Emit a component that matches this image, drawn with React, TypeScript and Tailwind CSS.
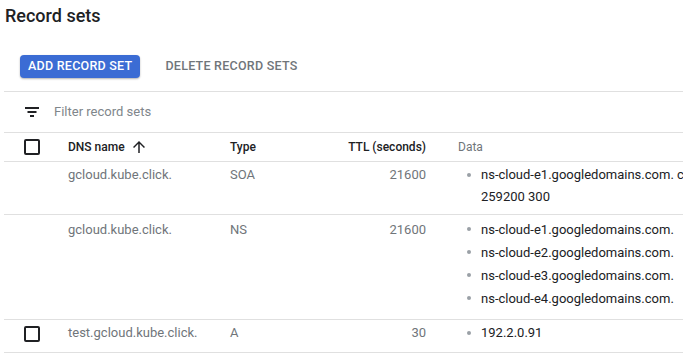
import React from "react";

const Checkbox = () => (
  <div className="w-[16px] h-[16px] border-2 border-[#202124] rounded-[2px] box-border" />
);

const Bullet = ({ children }: { children: React.ReactNode }) => (
  <div className="flex">
    <div className="w-[23px] shrink-0 relative">
      <span className="absolute left-[9px] top-[9px] w-[4px] h-[4px] rounded-full bg-[#9aa0a6]" />
    </div>
    <div className="whitespace-nowrap">{children}</div>
  </div>
);

export default function App() {
  return (
    <div
      className="w-[683px] h-[361px] overflow-hidden bg-white"
      style={{ fontFamily: "Roboto, 'Liberation Sans', sans-serif" }}
    >
      <div className="pl-[4px]">
        <h1 className="pt-[4px] pl-[1px] text-[18px] leading-[24px] font-medium text-[#202124]">Record sets</h1>
        <div className="mt-[27px] flex items-center pl-[16px] h-[23px]">
          <button className="h-[23px] px-[8px] rounded-[4px] bg-[#3b6cd4] text-white text-[12.5px] font-medium tracking-[0.25px] shadow-[0_1px_2px_rgba(0,0,0,0.3)]">
            ADD RECORD SET
          </button>
          <button className="ml-[17px] px-[8px] h-[23px] text-[12.5px] font-medium tracking-[0.25px] text-[#70757a]">
            DELETE RECORD SETS
          </button>
        </div>
        <div className="mt-[13px] border-t border-[#e0e0e0]" />
        <div className="h-[40px] flex items-center pl-[21px]">
          <svg width="14" height="10" viewBox="0 0 14 10" className="mr-[15px]">
            <rect x="0" y="0" width="14" height="2" fill="#202124" />
            <rect x="2.5" y="4" width="9" height="2" fill="#202124" />
            <rect x="5" y="8" width="4" height="2" fill="#202124" />
          </svg>
          <span className="text-[13px] text-[#80868b]">Filter record sets</span>
        </div>
        <div className="w-[900px] text-[13px]">
          <div className="flex items-center h-[30px] border-y border-[#e0e0e0] text-[12px]">
            <div className="w-[64px] pl-[20px] shrink-0"><Checkbox /></div>
            <div className="w-[162px] shrink-0 flex items-center text-[#202124] font-medium">
              DNS name
              <svg width="18" height="18" viewBox="0 0 24 24" className="ml-[5px]">
                <path d="M4 12l1.41 1.41L11 7.83V20h2V7.83l5.58 5.59L20 12l-8-8-8 8z" fill="#202124" />
              </svg>
            </div>
            <div className="w-[80px] shrink-0 text-[#202124] font-medium">Type</div>
            <div className="w-[148px] shrink-0 text-right pr-[32px] text-[#202124] font-medium">TTL (seconds)</div>
            <div className="text-[#70757a]">Data</div>
          </div>
          <div className="flex h-[53px] border-b border-[#e0e0e0] pt-[2px] leading-[22px]">
            <div className="w-[64px] shrink-0" />
            <div className="w-[162px] shrink-0 text-[#70757a]">gcloud.kube.click.</div>
            <div className="w-[80px] shrink-0 text-[#70757a]">SOA</div>
            <div className="w-[148px] shrink-0 text-right pr-[32px] text-[#70757a]">21600</div>
            <div className="text-[#202124]">
              <Bullet>
                ns-cloud-e1.googledomains.com. cloud-dns-hostmaster.google.com. 1 21600 3600
                <br />
                259200 300
              </Bullet>
            </div>
          </div>
          <div className="flex h-[105px] border-b border-[#e0e0e0] pt-[3px] leading-[23px]">
            <div className="w-[64px] shrink-0" />
            <div className="w-[162px] shrink-0 text-[#70757a]">gcloud.kube.click.</div>
            <div className="w-[80px] shrink-0 text-[#70757a]">NS</div>
            <div className="w-[148px] shrink-0 text-right pr-[32px] text-[#70757a]">21600</div>
            <div className="text-[#202124]">
              <Bullet>ns-cloud-e1.googledomains.com.</Bullet>
              <Bullet>ns-cloud-e2.googledomains.com.</Bullet>
              <Bullet>ns-cloud-e3.googledomains.com.</Bullet>
              <Bullet>ns-cloud-e4.googledomains.com.</Bullet>
            </div>
          </div>
          <div className="flex h-[33px] border-b border-[#e0e0e0] pt-[2px] leading-[22px]">
            <div className="w-[64px] shrink-0 pl-[20px] pt-[4px]"><Checkbox /></div>
            <div className="w-[162px] shrink-0 text-[#70757a]">test.gcloud.kube.click.</div>
            <div className="w-[80px] shrink-0 text-[#70757a]">A</div>
            <div className="w-[148px] shrink-0 text-right pr-[32px] text-[#70757a]">30</div>
            <div className="text-[#202124]">
              <Bullet>192.2.0.91</Bullet>
            </div>
          </div>
        </div>
      </div>
    </div>
  );
}
